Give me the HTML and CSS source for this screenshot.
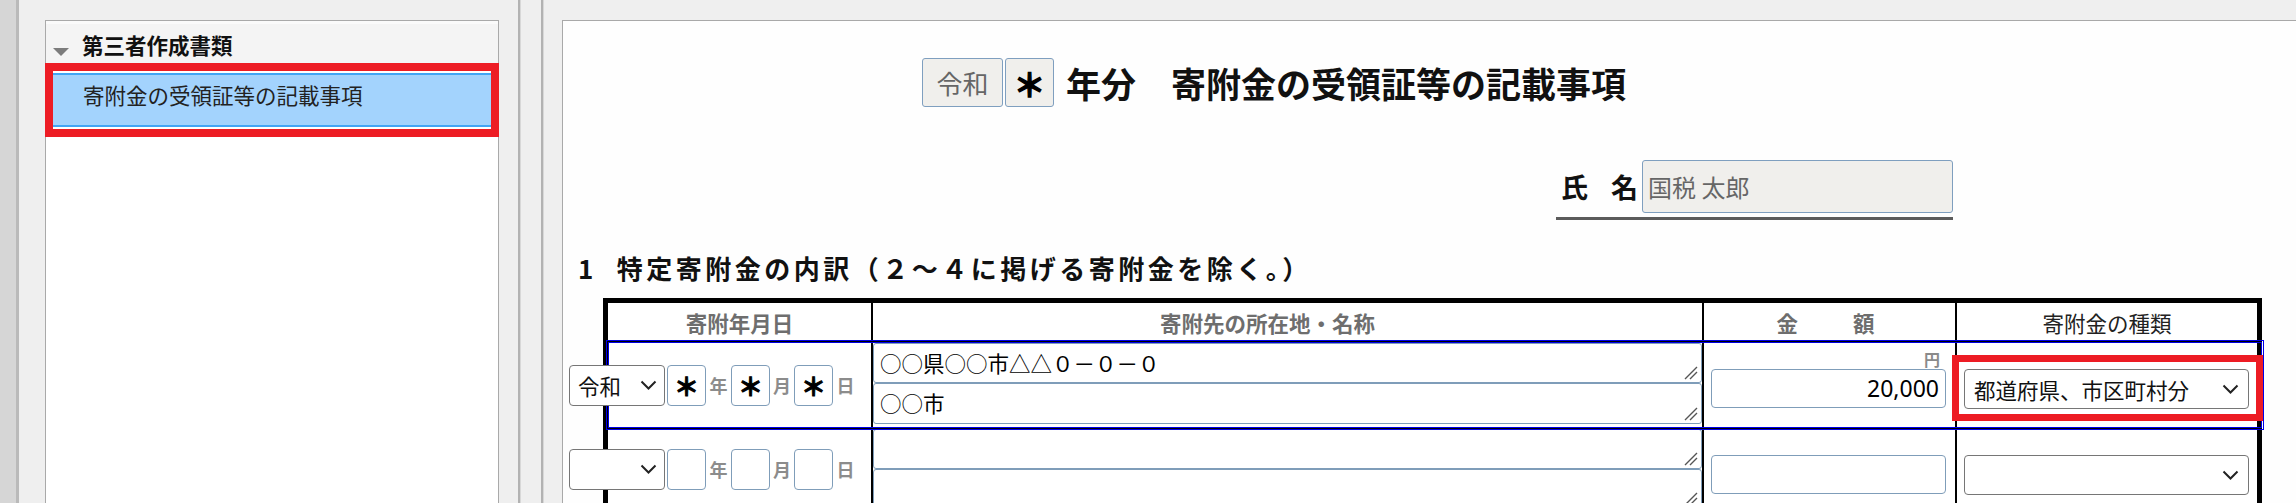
FILE: index.html
```html
<!DOCTYPE html>
<html lang="ja">
<head>
<meta charset="utf-8">
<title>寄附金の受領証等の記載事項</title>
<link rel="stylesheet" href="styles.css">
</head>
<body>
<div class="edge"></div>
<div class="side-wrap">
  <div class="side">
    <div class="side-head"><span class="tri"></span><span class="side-title">第三者作成書類</span></div>
    <div class="mark"><div class="side-item">寄附金の受領証等の記載事項</div></div>
  </div>
</div>
<div class="sep"></div>
<div class="sep sep2"></div>
<div class="main">
  <div class="title-row">
    <div class="era-box">令和</div>
    <div class="year-box">＊</div>
    <h1 class="title">年分　寄附金の受領証等の記載事項</h1>
  </div>
  <div class="name-row">
    <div class="name-label"><span>氏</span><span class="n2">名</span></div>
    <div class="name-input">国税 太郎</div>
  </div>
  <h2 class="heading"><span class="hnum">1</span>特定寄附金の内訳（２～４に掲げる寄附金を除く。）</h2>
  <div class="tbl">
    <div class="c hc hg">寄附年月日</div>
    <div class="c hc hg h2c">寄附先の所在地・名称</div>
    <div class="c hc hg h3c"><span>金</span><span class="gap"></span><span>額</span></div>
    <div class="c hc h4c">寄附金の種類</div>

    <div class="c dc">
      <div class="date">
        <div class="sel sel-era"><span>令和</span><svg class="chev" width="17" height="10" viewBox="0 0 17 10"><path d="M1.5 1.5 L8.5 8.5 L15.5 1.5" fill="none" stroke="#222" stroke-width="2"/></svg></div>
        <div class="inp">＊</div><span class="lbl">年</span>
        <div class="inp">＊</div><span class="lbl l2">月</span>
        <div class="inp">＊</div><span class="lbl">日</span>
      </div>
    </div>
    <div class="c ac">
      <div class="ta ta1">○○県○○市△△０－０－０<svg class="grip" width="14" height="14" viewBox="0 0 14 14"><path d="M1 13 L13 1 M6 13 L13 6" stroke="#555" stroke-width="1.4" fill="none"/></svg></div>
      <div class="ta ta2">○○市<svg class="grip" width="14" height="14" viewBox="0 0 14 14"><path d="M1 13 L13 1 M6 13 L13 6" stroke="#555" stroke-width="1.4" fill="none"/></svg></div>
    </div>
    <div class="c mc">
      <div class="yen">円</div>
      <div class="amt">20,000</div>
    </div>
    <div class="c kc">
      <div class="sel sel-kind"><span>都道府県、市区町村分</span><svg class="chev" width="17" height="10" viewBox="0 0 17 10"><path d="M1.5 1.5 L8.5 8.5 L15.5 1.5" fill="none" stroke="#222" stroke-width="2"/></svg></div>
    </div>

    <div class="c dc">
      <div class="date">
        <div class="sel sel-era"><span></span><svg class="chev" width="17" height="10" viewBox="0 0 17 10"><path d="M1.5 1.5 L8.5 8.5 L15.5 1.5" fill="none" stroke="#222" stroke-width="2"/></svg></div>
        <div class="inp"></div><span class="lbl">年</span>
        <div class="inp"></div><span class="lbl l2">月</span>
        <div class="inp"></div><span class="lbl">日</span>
      </div>
    </div>
    <div class="c ac">
      <div class="ta ta1"><svg class="grip" width="14" height="14" viewBox="0 0 14 14"><path d="M1 13 L13 1 M6 13 L13 6" stroke="#555" stroke-width="1.4" fill="none"/></svg></div>
      <div class="ta ta2"><svg class="grip" width="14" height="14" viewBox="0 0 14 14"><path d="M1 13 L13 1 M6 13 L13 6" stroke="#555" stroke-width="1.4" fill="none"/></svg></div>
    </div>
    <div class="c mc">
      <div class="yen"></div>
      <div class="amt"></div>
    </div>
    <div class="c kc">
      <div class="sel sel-kind"><span></span><svg class="chev" width="17" height="10" viewBox="0 0 17 10"><path d="M1.5 1.5 L8.5 8.5 L15.5 1.5" fill="none" stroke="#222" stroke-width="2"/></svg></div>
    </div>

    <div class="focus"></div>
    <div class="mark2"></div>
  </div>
</div>
</body>
</html>
```
FILE: styles.css
```css
* { box-sizing: border-box; }
html, body { margin: 0; padding: 0; }
body {
  width: 2296px;
  height: 503px;
  overflow: hidden;
  background: #efefef;
  display: flex;
  align-items: flex-start;
  font-family: "Noto Sans CJK JP", "Noto Sans", sans-serif;
  color: #111;
}
.edge {
  flex: none;
  width: 19px;
  height: 503px;
  background: #d6d6d6;
  border-right: 3px solid #bababa;
}
.side-wrap {
  flex: none;
  padding: 20px 0 0 26px;
}
.side {
  width: 454px;
  height: 520px;
  border: 1px solid #a9a9a9;
  background: #fff;
}
.side-head {
  height: 42px;
  background: #f4f4f4;
  box-shadow: inset 0 3px 0 #fafafa;
  display: flex;
  align-items: center;
  padding-left: 7px;
}
.tri {
  align-self: flex-start;
  margin-top: 27px;
  width: 0;
  height: 0;
  border-left: 8.5px solid transparent;
  border-right: 8.5px solid transparent;
  border-top: 8px solid #7c7c7c;
}
.side-title {
  margin-left: 13px;
  padding-top: 4px;
  font-size: 21.5px;
  font-weight: 700;
  color: #111;
}
.mark {
  margin: 0 -1px;
  border: 8px solid #ed1c24;
  padding: 2px 0;
  background: #fff;
}
.side-item {
  height: 54px;
  border-top: 2px solid #42a5f5;
  border-bottom: 2px solid #42a5f5;
  background: #a3d3fd;
  line-height: 40px;
  padding-left: 30px;
  font-size: 21.5px;
  color: #222;
}
.sep {
  flex: none;
  width: 3px;
  height: 503px;
  margin-left: 19px;
  background: #b2b2b2;
  border-right: 1px solid #d8d8d8;
}
.sep2 { margin-left: 20px; }
.main {
  flex: none;
  margin: 20px 0 0 18px;
  width: 1800px;
  height: 600px;
  border: 1px solid #a9a9a9;
  background: #fefefe;
  padding-top: 37px;
}
.title-row {
  display: flex;
  align-items: center;
  margin-left: 359px;
  height: 49px;
}
.era-box, .year-box {
  height: 49px;
  border: 1px solid #7f9fbf;
  border-radius: 3px;
  background: #f0efec;
  display: flex;
  align-items: center;
  justify-content: center;
}
.era-box {
  width: 81px;
  font-size: 26px;
  color: #666;
}
.year-box {
  width: 49px;
  margin-left: 2px;
  font-size: 32px;
  font-weight: 700;
  color: #000;
  -webkit-text-stroke: 1.3px #000;
}
.title {
  margin: 0 0 0 12px;
  font-size: 35px;
  font-weight: 700;
  line-height: 49px;
  color: #111;
}
.name-row {
  display: flex;
  align-items: center;
  width: 397px;
  margin: 53px 0 0 993px;
  padding-bottom: 4px;
  border-bottom: 3px solid #5b5b5b;
  box-sizing: content-box;
}
.name-label {
  width: 86px;
  padding-left: 5px;
  display: flex;
  font-size: 27px;
  font-weight: 700;
  color: #111;
}
.n2 { margin-left: 23px; }
.name-input {
  width: 311px;
  height: 53px;
  border: 1px solid #7f9fbf;
  border-radius: 3px;
  background: #f0efec;
  padding-left: 5px;
  font-size: 24px;
  line-height: 51px;
  color: #666;
}
.heading {
  margin: 30px 0 0 15px;
  font-size: 26px;
  font-weight: 700;
  line-height: 36px;
  letter-spacing: 3.5px;
  color: #111;
}
.hnum {
  display: inline-block;
  margin-right: 20px;
}
.tbl {
  position: relative;
  margin: 12px 0 0 40px;
  width: 1659px;
  border: 5px solid #000;
  border-bottom: 0;
  display: grid;
  grid-template-columns: 263px 829px 251px 300px;
  grid-template-rows: 38px 84px 80px;
  gap: 2px;
  background: #000;
}
.c { background: #fff; }
.hc {
  display: flex;
  align-items: center;
  justify-content: center;
  font-size: 21.5px;
}
.hg {
  color: #6e6e6e;
  font-weight: 700;
}
.h2c { padding-right: 40px; }
.h3c { padding-right: 8px; }
.gap { display: inline-block; width: 55px; }
.h4c { color: #222; }
.dc {
  display: flex;
  align-items: center;
}
.date {
  display: flex;
  align-items: center;
  margin-left: -39px;
}
.sel {
  position: relative;
  z-index: 2;
  height: 41px;
  border: 1px solid #767676;
  border-radius: 4px;
  background: #fff;
  display: flex;
  align-items: center;
  justify-content: space-between;
  padding: 0 7px 0 8px;
  font-size: 21.5px;
  color: #111;
}
.sel-era { width: 96px; }
.chev { flex: none; }
.inp {
  width: 39px;
  height: 41px;
  margin-left: 2px;
  border: 1px solid #7f9db9;
  border-radius: 4px;
  background: #fff;
  display: flex;
  align-items: center;
  justify-content: center;
  font-size: 25px;
  font-weight: 700;
  color: #000;
  -webkit-text-stroke: 1px #000;
}
.lbl + .inp { margin-left: 0; }
.lbl {
  width: 25px;
  text-align: center;
  font-size: 18px;
  font-weight: 700;
  color: #8c8c8c;
}
.l2 { width: 24px; }
.ac {
  display: flex;
  flex-direction: column;
}
.ta {
  position: relative;
  border: 1px solid #7f9db9;
  border-radius: 3px;
  padding-left: 6px;
  font-size: 21.5px;
  line-height: 37px;
  color: #000;
}
.ta1 { height: 40px; }
.ta2 { height: 41px; }
.grip {
  position: absolute;
  right: 3px;
  bottom: 2px;
}
.mc { padding: 6px 9px 0 7px; }
.yen {
  height: 20px;
  line-height: 20px;
  text-align: right;
  padding-right: 6px;
  font-size: 16px;
  font-weight: 700;
  color: #8a8a8a;
}
.amt {
  height: 39px;
  border: 1px solid #7f9db9;
  border-radius: 4px;
  background: #fff;
  text-align: right;
  padding-right: 6px;
  font-family: "Noto Sans", sans-serif;
  font-size: 23px;
  line-height: 37px;
  color: #000;
}
.kc { padding: 26px 8px 0 7px; }
.sel-kind {
  height: 40px;
  padding: 0 9px 0 9px;
}
.focus {
  position: absolute;
  left: -2px;
  top: 37px;
  width: 1658px;
  height: 90px;
  border: 3px double #0000e6;
  z-index: 1;
  pointer-events: none;
}
.mark2 {
  position: absolute;
  left: 1344px;
  top: 52px;
  width: 311px;
  height: 66px;
  border: 7px solid #ed1c24;
  z-index: 3;
  pointer-events: none;
}
```
